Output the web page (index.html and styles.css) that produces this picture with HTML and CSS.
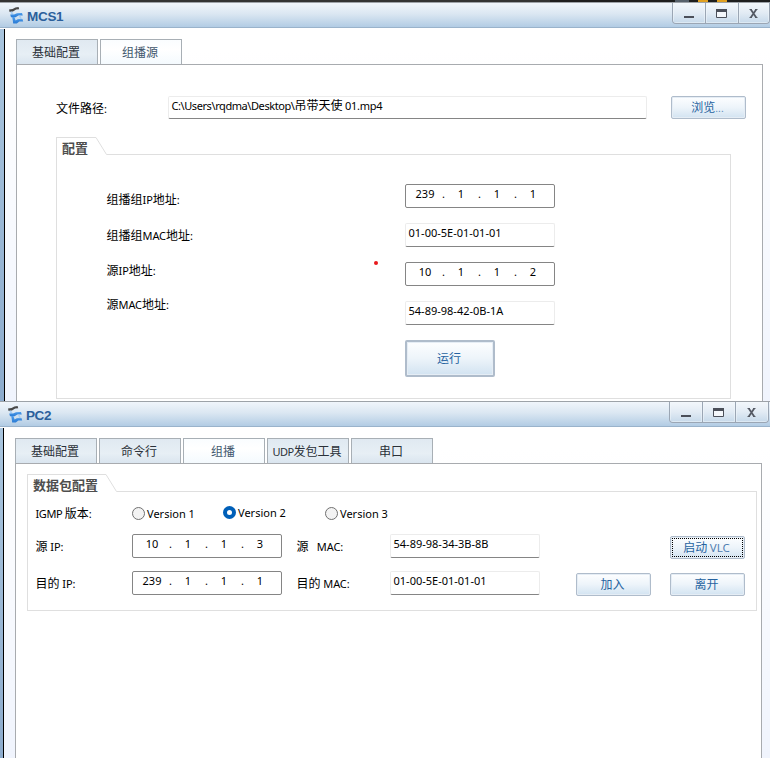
FILE: index.html
```html
<!DOCTYPE html>
<html lang="zh-CN">
<head>
<meta charset="utf-8">
<title>MCS1 / PC2</title>
<link rel="stylesheet" href="styles.css">
</head>
<body>
<svg width="0" height="0" class="defs" aria-hidden="true">
  <defs>
    <linearGradient id="blue" x1="0" y1="0" x2="0" y2="1"><stop offset="0" stop-color="#4c9cec"/><stop offset="1" stop-color="#2a7bd4"/></linearGradient>
  </defs>
  <symbol id="logo" viewBox="0 0 16 18">
    <path d="M1 3.4 L4.6 3 L7.4 1.4 L10.6 1 L11.2 3.2 L8.2 3.6 L5 5.6 L1.6 6 Z" fill="#484848"/>
    <path d="M2.2 5.8 L4 5.6 L5.8 8.4 L3.6 8.8 Z" fill="#a6cdf3"/>
    <path d="M2.2 8.6 L6 8.6 L9 7.2 L14 7 L14.8 9.4 L10.4 9.6 L7.6 11.2 L3 11.2 Z" fill="url(#blue)"/>
    <path d="M4.2 11 L6.4 11 L7.6 14.4 L9.8 13.2 L14.4 13 L15.2 15.4 L11.4 15.6 L8.8 17.6 L5.2 17.6 L4.8 14.4 Z" fill="url(#blue)"/>
    <path d="M10.8 9.6 L12.4 9.5 L14 13.2 L12.4 13.3 Z" fill="#a6cdf3"/>
  </symbol>
  <symbol id="min" viewBox="0 0 12 12"><path d="M1 8h10v2H1z" fill="#4b4f59"/></symbol>
  <symbol id="max" viewBox="0 0 12 12"><path d="M.5 1.5h10v8H.5z" fill="#f4f7fb" stroke="#4b4f59"/><path d="M0 1h11v3H0z" fill="#4b4f59"/></symbol>
  <symbol id="close" viewBox="0 0 12 12"><path d="M2.8 1.5 L8.2 9.5 M8.2 1.5 L2.8 9.5" stroke="#555a64" stroke-width="1.8"/><path d="M1.5 1.5h2.5M7 1.5h2.5M1.5 9.5h2.5M7 9.5h2.5" stroke="#555a64"/></symbol>
</svg>

<div class="backdrop"><i></i><i></i><i></i></div>

<section class="window mcs">
  <header class="titlebar">
    <svg class="logo"><use href="#logo"/></svg>
    <h1 class="title">MCS1</h1>
    <div class="controls">
      <span><svg><use href="#min"/></svg></span><span><svg><use href="#max"/></svg></span><span><svg><use href="#close"/></svg></span>
    </div>
  </header>
  <div class="frame">
    <nav class="tabs">
      <span class="tab">基础配置</span><span class="tab active">组播源</span>
    </nav>
    <main class="panel">
      <div class="path-row">
        <label class="label"><span class="zh">文件路径</span>:</label>
        <div class="field"><span class="path">C:\Users\rqdma\Desktop\</span><span class="zh">吊带天使</span><span class="file"> 01.mp4</span></div>
        <button class="button">浏览<span class="dots">...</span></button>
      </div>
      <div class="group">
        <div class="group-head">
          <div class="legend">配置</div>
          <svg class="slant" viewBox="0 0 11 18"><path d="M0 .5 L10.5 17.5 H11"/></svg>
          <div class="rule"></div>
        </div>
        <div class="group-body">
          <div class="labels">
            <label class="label"><span class="zh">组播组</span>IP<span class="zh">地址</span>:</label>
            <label class="label"><span class="zh">组播组</span>MAC<span class="zh">地址</span>:</label>
            <label class="label"><span class="zh">源</span>IP<span class="zh">地址</span>:</label>
            <label class="label"><span class="zh">源</span>MAC<span class="zh">地址</span>:</label>
          </div>
          <div class="values">
            <div class="ip"><b>239</b><i>.</i><b>1</b><i>.</i><b>1</b><i>.</i><b>1</b></div>
            <div class="field">01-00-5E-01-01-01</div>
            <div class="ip"><b>10</b><i>.</i><b>1</b><i>.</i><b>1</b><i>.</i><b>2</b></div>
            <div class="field">54-89-98-42-0B-1A</div>
            <button class="button run">运行</button>
          </div>
          <span class="dot"></span>
        </div>
      </div>
    </main>
  </div>
</section>

<section class="window pc">
  <header class="titlebar">
    <svg class="logo"><use href="#logo"/></svg>
    <h1 class="title">PC2</h1>
    <div class="controls">
      <span><svg><use href="#min"/></svg></span><span><svg><use href="#max"/></svg></span><span><svg><use href="#close"/></svg></span>
    </div>
  </header>
  <div class="frame">
    <nav class="tabs">
      <span class="tab">基础配置</span><span class="tab">命令行</span><span class="tab active">组播</span><span class="tab"><span class="latin">UDP</span>发包工具</span><span class="tab">串口</span>
    </nav>
    <main class="panel">
      <div class="group">
        <div class="group-head">
          <div class="legend">数据包配置</div>
          <svg class="slant" viewBox="0 0 11 18"><path d="M0 .5 L10.5 17.5 H11"/></svg>
          <div class="rule"></div>
        </div>
        <div class="group-body">
          <div class="versions">
            <label class="label"><span class="igmp">IGMP </span><span class="zh">版本</span>:</label>
            <span class="option"><i class="radio"></i>Version 1</span>
            <span class="option on"><i class="radio"></i>Version 2</span>
            <span class="option"><i class="radio"></i>Version 3</span>
          </div>
          <div class="line">
            <label class="label"><span class="zh">源</span> IP:</label>
            <div class="ip"><b>10</b><i>.</i><b>1</b><i>.</i><b>1</b><i>.</i><b>3</b></div>
            <label class="label"><span class="zh">源</span> &nbsp; MAC:</label>
            <div class="field">54-89-98-34-3B-8B</div>
            <span></span>
            <button class="button focused">启动 <span class="vlc">VLC</span></button>
          </div>
          <div class="line">
            <label class="label"><span class="zh">目的</span> IP:</label>
            <div class="ip"><b>239</b><i>.</i><b>1</b><i>.</i><b>1</b><i>.</i><b>1</b></div>
            <label class="label"><span class="zh">目的</span> MAC:</label>
            <div class="field">01-00-5E-01-01-01</div>
            <button class="button">加入</button>
            <button class="button">离开</button>
          </div>
        </div>
      </div>
    </main>
  </div>
</section>
</body>
</html>
```
FILE: styles.css
```css
* { box-sizing: border-box; }

body {
  margin: 0;
  width: 770px;
  height: 758px;
  overflow: hidden;
  background: #fff;
  color: #000;
  font: 11px/14px "Noto Sans", "Noto Sans CJK SC", sans-serif;
}

.defs { position: absolute; }

.backdrop {
  display: flex;
  justify-content: flex-end;
  gap: 9px;
  height: 2px;
  padding-right: 43px;
  background: linear-gradient(90deg, #333 0 550px, #1e1e1e 550px);
}
.backdrop i { width: 10px; background: #e0a020; }
.backdrop i:first-child { width: 14px; background: #57616b; }

.window { display: flex; flex-direction: column; overflow: hidden; }
.mcs { height: 399px; }
.pc { height: 357px; }

.titlebar {
  display: flex;
  flex: none;
  height: 26px;
  border-top: 1px solid #9da2a8;
  border-bottom: 1px solid #9ab3cb;
  background: linear-gradient(#f0f5fb, #dbe7f2 45%, #b2cce4);
}
.logo { width: 16px; height: 18px; margin: 3px 2px 0 8px; }
.pc .logo { margin-left: 7px; }
.title {
  margin: 0;
  padding-left: 1px;
  color: #2b609c;
  font: bold 13.5px/27px "Liberation Sans", Arial, sans-serif;
  letter-spacing: -.3px;
}
.pc .title { letter-spacing: -.4px; }

.controls {
  display: flex;
  height: 21px;
  margin-left: auto;
  border: 1px solid #9ba6b4;
  border-top: 0;
  border-radius: 0 0 4px 4px;
  background: linear-gradient(#f3f7fb, #e2ebf4 50%, #c6d9ea);
  overflow: hidden;
}
.pc .controls { margin-right: 1px; }
.controls span {
  display: flex;
  justify-content: center;
  width: 33px;
  padding-top: 5px;
  box-shadow: inset 0 0 0 1px #f2f7fc80;
}
.controls span:first-child { width: 32px; }
.mcs .controls span:last-child { width: 31px; }
.controls span + span { border-left: 1px solid #9ba6b4; }
.controls svg { width: 12px; height: 12px; }

.frame {
  flex: 1;
  display: flex;
  flex-direction: column;
  min-height: 0;
  margin-top: 1px;
  padding: 10px 7px 0 12px;
  border: 0 solid;
  border-image: linear-gradient(#a9c5de, #8cabcd) 1;
  background: linear-gradient(#fff, #fff 20px, #f0f4fd);
  box-shadow: inset 1px 0 #000;
}
.mcs .frame { border-left-width: 4px; }
.pc .frame { border-left-width: 3px; padding-right: 8px; }

.tabs { display: flex; gap: 2px; height: 25px; flex: none; }
.tab {
  width: 82px;
  padding-right: 2px;
  border: 1px solid #a8afb5;
  border-bottom: 0;
  background: linear-gradient(#e0e9f1, #e7eff5 60%, #dae5ef);
  color: #2b3139;
  font: 12px/23px "Noto Sans CJK SC", sans-serif;
  text-align: center;
  white-space: nowrap;
}
.tab.active { background: linear-gradient(#fafdff, #fff 40%, #f4fafe); color: #40566d; }
.latin { font: 11px "Noto Sans", sans-serif; letter-spacing: -.5px; }

.panel { flex: 1; min-height: 0; border: 1px solid #a8abaf; border-bottom: 0; background: #fff; }

.zh { font: 12px/14px "Noto Sans CJK SC", sans-serif; letter-spacing: 0; }
.label { height: 14px; white-space: nowrap; line-height: 14px; }

.field, .ip { height: 24px; border: 1px solid #ececec; border-bottom-color: #858585; border-radius: 2px; background: #fff; line-height: 19px; white-space: nowrap; }
.field { padding-left: 2.5px; }
.ip { display: flex; padding-left: 9px; border-color: #858585; line-height: 18px; }
.ip b { width: 20px; font-weight: normal; text-align: center; }
.ip i { width: 16px; padding-left: 1px; font-style: normal; text-align: center; }

.button {
  height: 23px;
  padding: 0 2px 2px 0;
  border: 1px solid #afbccb;
  border-radius: 2px;
  background: linear-gradient(#fdfeff, #edf4fa 50%, #d2e3f1);
  box-shadow: inset 0 0 0 1px #e5edf5;
  color: #2663a0;
  font: 12px/17px "Noto Sans CJK SC", sans-serif;
}
.button.focused { outline: 1px dotted #000; outline-offset: -3px; }
.vlc { color: #527fb2; font: 11.5px "Noto Sans", sans-serif; }
.dots { font-size: 10px; color: #5f8dbd; }

.path-row { display: grid; grid-template-columns: 112px 479px 75px; padding: 31px 0 0 39px; }
.path-row .label { margin-top: 5px; }
.path-row .field { height: 23px; line-height: 18px; }
.path-row .button { width: 75px; margin-left: 24px; }
.path { letter-spacing: -.42px; }
.file { letter-spacing: -.3px; white-space: pre; }
.igmp { letter-spacing: -.4px; white-space: pre; }

.group-head { display: flex; height: 18px; }
.legend {
  border: 1px solid #dfdfdf;
  border-width: 1px 0 0 1px;
  color: #4e4e4e;
  font: bold 13px/19px "Noto Sans CJK SC", sans-serif;
  white-space: nowrap;
}
.slant { width: 11px; height: 18px; fill: none; stroke: #dfdfdf; flex: none; }
.rule { flex: 1; border-bottom: 1px solid #dfdfdf; }
.group-body { position: relative; border: 1px solid #dfdfdf; border-top: 0; }

.mcs .group { width: 675px; margin: 18px 0 0 39px; }
.mcs .legend { width: 40px; padding-left: 5px; }
.mcs .group-body { display: flex; height: 244px; padding-left: 49.5px; }
.labels { display: flex; flex-direction: column; gap: 21px; width: 298.5px; padding-top: 37px; letter-spacing: -.1px; }
.labels .label:nth-child(2) { margin-top: 1px; }
.labels .label:nth-child(4) { margin-top: -1px; }
.values { display: flex; flex-direction: column; gap: 15px; width: 150px; padding-top: 29px; }
.values .field { line-height: 18px; letter-spacing: 0; }
.run { width: 90px; height: 37px; border-width: 2px; line-height: 28px; }
.dot { position: absolute; left: 316.5px; top: 105.5px; width: 4px; height: 4px; border-radius: 50%; background: #e8191c; }

.pc .group { width: 730px; margin: 10px 0 0 11px; }
.pc .legend { width: 79px; padding-left: 5px; }
.pc .group-body { height: 119px; padding: 14px 0 0 7.5px; }
.versions { display: grid; grid-template-columns: 96.5px 91px 102px 80px; height: 28px; }
.option { display: flex; align-items: center; gap: 2px; height: 15px; white-space: nowrap; }
.versions .option:nth-child(3) { height: 13px; }
.radio { width: 13px; height: 13px; border: 1px solid #707070; border-radius: 50%; background: #f3f3f3; }
.on .radio { border: 4px solid #005fb8; background: #fff; }
.line { display: grid; grid-template-columns: 96.5px 164.5px 93.5px 150px 75px 75px; height: 37px; }
.line .label { margin-top: 5px; letter-spacing: -.1px; }
.line .ip { width: 150px; }
.line .field { width: 150px; letter-spacing: 0; line-height: 18px; }
.line .button { width: 75px; margin: 2px 0 0 36px; }
.line .button:last-child { margin-left: 55px; }
```
